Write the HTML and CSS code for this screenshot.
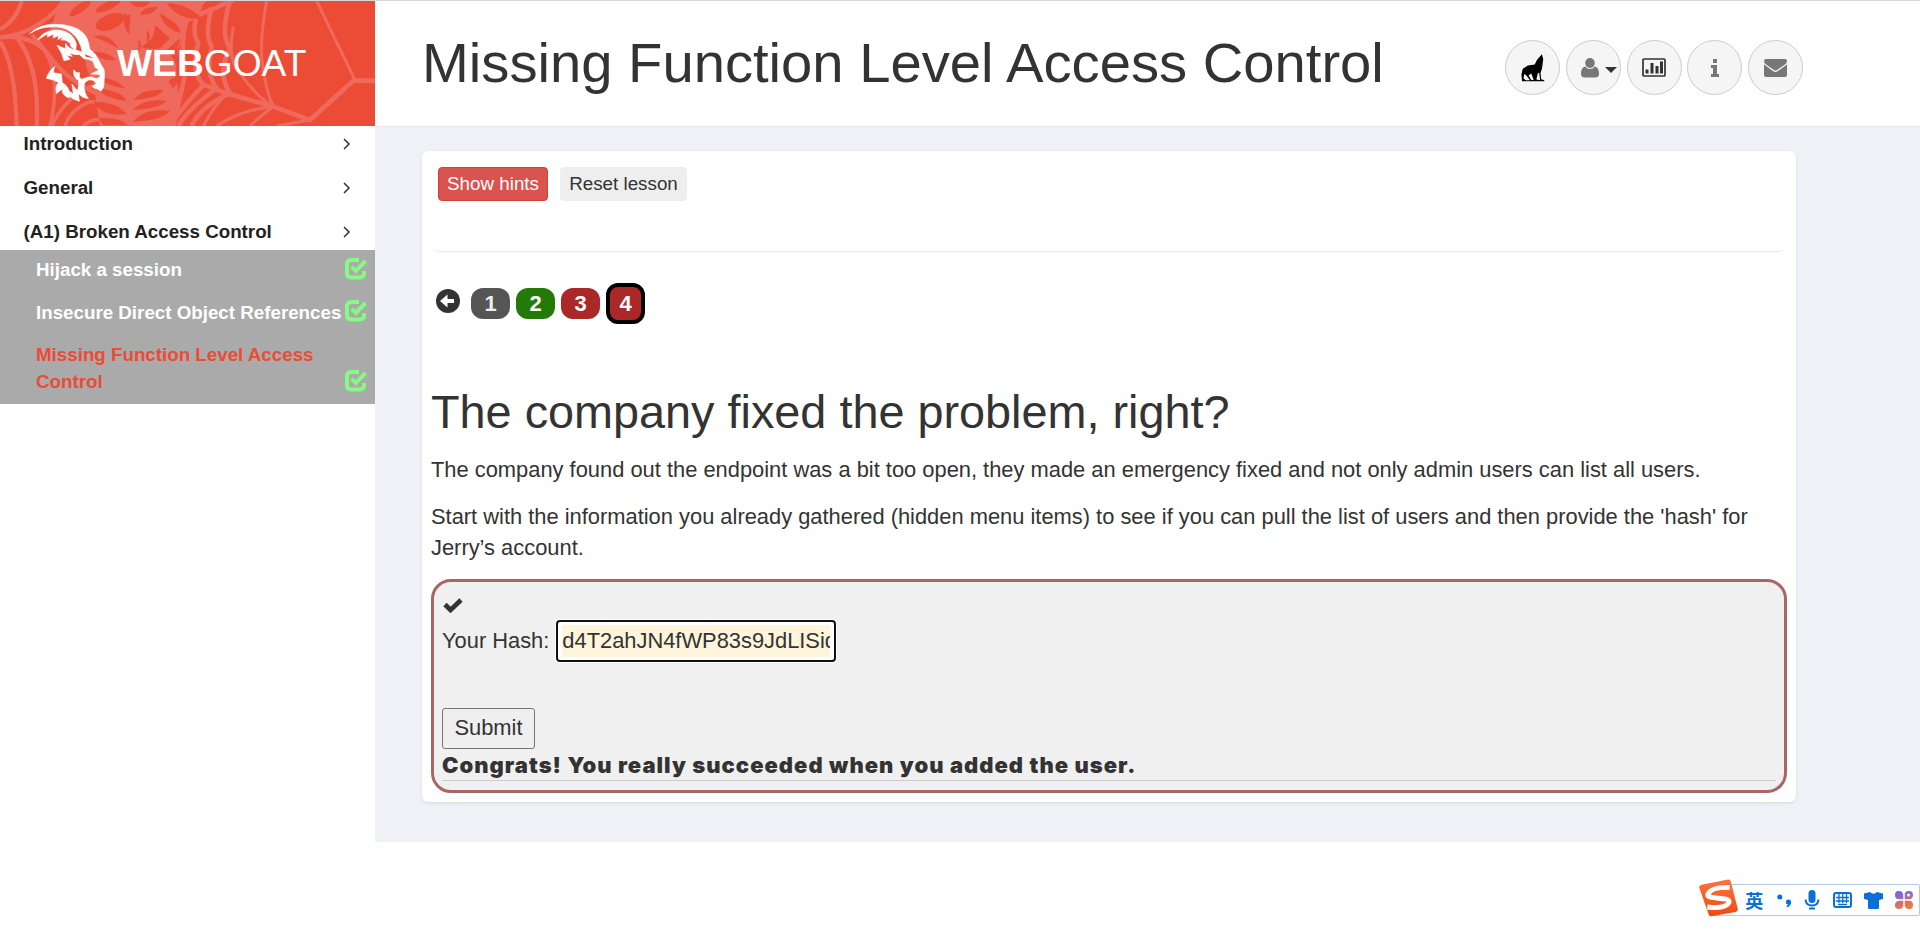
FILE: index.html
```html
<!DOCTYPE html>
<html lang="en">
<head>
<meta charset="utf-8">
<title>WebGoat</title>
<link rel="stylesheet" href="styles.css">
</head>
<body>
<div class="app">
  <aside class="sidebar">
    <div class="brand">
      <svg class="web" viewBox="0 3 1125 375" preserveAspectRatio="none" fill="none" stroke="#ef6a5d" stroke-width="11">
        <path d="M0 112Q65 108 120 70T190 3M0 88Q50 60 65 3M0 112Q100 100 150 170T290 280L390 378M0 125Q45 190 50 378M50 112Q120 200 110 378" stroke-width="13"/>
        <path d="M95 105Q195 190 150 378M155 378Q190 300 270 260Q350 250 390 330M195 378Q210 330 270 305Q340 310 390 378M250 378Q290 340 345 378"/>
        <path d="M150 75Q240 90 290 0M180 105Q270 110 340 0M215 3Q240 55 310 80L430 150" stroke-width="13"/>
        <path d="M180 3H620L560 70Q510 180 540 300L520 378H300L280 250Q240 180 260 110L150 90Z" fill="#ef6a5d" stroke="none"/>
        <path d="M560 60Q540 120 555 225L520 378M600 20Q570 90 595 130Q570 210 610 255Q540 330 510 378M640 10Q610 100 635 140Q615 220 650 265Q560 330 535 378M690 3Q660 100 690 145Q650 220 690 280Q600 320 575 378" stroke-width="14"/>
        <path d="M560 60L700 0M600 250L680 280L820 320L930 360L1060 242L1125 242" stroke-width="14"/>
        <path d="M800 3Q775 140 790 210Q800 280 820 320Q720 330 650 378M700 80Q680 180 720 220Q770 290 820 320M950 3L1065 240L930 360M820 320Q790 340 750 378M680 280Q640 320 610 378M930 360L830 378" stroke-width="9"/>
        <g fill="#ec4b36" stroke="none">
          <ellipse cx="330" cy="66" rx="45" ry="23" transform="rotate(-22 330 66)"/>
          <ellipse cx="325" cy="17" rx="42" ry="12" transform="rotate(-25 325 17)"/>
          <ellipse cx="240" cy="25" rx="38" ry="12" transform="rotate(-35 240 25)"/>
          <path d="M372 40Q382 50 392 42L387 104Q366 75 372 40ZM390 5H450Q435 30 400 17ZM420 45Q425 20 475 20Q460 45 420 45ZM500 10Q560 10 605 55Q540 65 500 10ZM620 5H660Q650 25 620 20ZM480 40Q485 80 540 100Q545 75 480 40ZM465 75L510 115L480 145Q450 150 420 140Q465 125 465 75ZM440 90Q460 110 440 128ZM415 115Q430 135 415 155ZM280 110Q325 95 355 145Q310 120 280 110ZM280 155Q325 155 350 180Q300 185 280 155Z"/>
          <path d="M540 115Q525 160 535 205Q515 165 500 150ZM505 245Q525 225 540 235L520 265ZM290 230Q350 235 375 265Q325 260 290 230ZM285 265Q360 270 380 302Q325 300 285 265ZM280 305Q350 305 380 342Q305 350 280 305ZM295 355Q360 350 385 376H310ZM400 300Q425 265 490 270Q475 295 400 300ZM398 330Q430 295 500 302Q480 325 398 330ZM400 365Q430 325 510 332Q490 360 400 365Z"/>
        </g>
      </svg>
      <svg class="goat" viewBox="0 0 255 264" fill="#fff" stroke="#fff" stroke-width="2" stroke-linejoin="round">
        <path d="M14 47Q45 18 90 19Q148 20 172 43Q190 57 194 93L212 110L230 143Q241 155 238 178L236 206L228 220L216 212Q204 212 202 204L214 198L208 188Q188 180 178 197Q174 220 190 242Q170 240 160 226L163 250Q142 244 132 232L134 240Q108 232 112 212L94 227Q90 204 100 193Q85 184 64 181Q71 158 89 145L84 164L109 168L112 195Q124 198 133 220L145 228L141 198L157 219Q164 200 160 187Q143 178 146 155Q154 168 164 164L163 177Q170 188 178 181Q198 172 213 182L226 176L222 169L198 168L222 156L210 148L204 130Q190 121 176 122L164 110Q145 111 133 105L142 115L126 112L135 124L117 128Q112 105 96 82L121 92L122 76Q130 93 152 96Q132 86 136 76Q120 62 108 66L116 54L99 65L100 53L84 60L86 48L67 57L68 47L38 66Q52 42 86 36Q126 34 146 60Q158 75 152 96L172 102Q166 65 138 42Q115 24 79 27Q48 25 14 47Z"/>
        <path d="M178 108L207 120L184 117Z" fill="#ec4b36" stroke="none"/>
      </svg>
      <div class="wordmark"><b>WEB</b>GOAT</div>
    </div>
    <ul class="menu">
      <li><span>Introduction</span><svg class="chev" viewBox="0 0 8 12"><path d="M1 1l5 5-5 5"/></svg></li>
      <li><span>General</span><svg class="chev" viewBox="0 0 8 12"><path d="M1 1l5 5-5 5"/></svg></li>
      <li><span>(A1) Broken Access Control</span><svg class="chev" viewBox="0 0 8 12"><path d="M1 1l5 5-5 5"/></svg></li>
    </ul>
    <ul class="submenu">
      <li><span>Hijack a session</span><svg class="done" viewBox="0 0 22 22"><path class="box" d="M14 2H6.500Q2 2 2 6.500V15Q2 19.500 6.500 19.500H14.500Q19 19.500 19 15V13"/><path class="tick" d="M6.800 8.800l4 4L20.500 3"/></svg></li>
      <li><span>Insecure Direct Object References</span><svg class="done" viewBox="0 0 22 22"><path class="box" d="M14 2H6.500Q2 2 2 6.500V15Q2 19.500 6.500 19.500H14.500Q19 19.500 19 15V13"/><path class="tick" d="M6.800 8.800l4 4L20.500 3"/></svg></li>
      <li class="current"><span>Missing Function Level Access Control</span><svg class="done" viewBox="0 0 22 22"><path class="box" d="M14 2H6.500Q2 2 2 6.500V15Q2 19.500 6.500 19.500H14.500Q19 19.500 19 15V13"/><path class="tick" d="M6.800 8.800l4 4L20.500 3"/></svg></li>
    </ul>
  </aside>
  <main class="main">
    <header class="header">
      <h1>Missing Function Level Access Control</h1>
      <div class="tools">
        <span class="tool"><svg width="24" height="28" viewBox="94 106 70 82"><path d="M155 107L159 121L157 137L155 150L151 162L153 180L162 183V186H97L95 166L99 149L114 140L134 137L141 123ZM104 164L101 177L108 183H120L112 172ZM124 163L116 169L124 182L131 182ZM143 163L139 181L150 183L147 161Z" fill-rule="evenodd"/></svg></span>
        <span class="tool user"><svg width="18" height="20" viewBox="0 0 18 20" fill="#777"><ellipse cx="9" cy="5" rx="4.800" ry="5"/><path d="M4.300 8.500Q6 11 9 11t4.700-2.500Q18 9.500 18 15.500 18 19.500 14.500 19.500H3.500Q0 19.500 0 15.500 0 9.500 4.300 8.500Z"/></svg><i class="caret"></i></span>
        <span class="tool"><svg width="24" height="19" viewBox="0 0 24 19" fill="#333"><rect x="1" y="1" width="22" height="17" rx="1" fill="none" stroke="#333" stroke-width="1.700"/><path d="M3.500 11.500h3v4h-3zM8.500 5h3v10.500h-3zM13.500 8h3v7.500h-3zM18 3.500h3v12h-3z"/></svg></span>
        <span class="tool"><svg width="8" height="18" viewBox="0 0 8 18" fill="#777"><path d="M2 0h4v4H2zM0 6h6v9h2v3H0v-3h2V9H0z"/></svg></span>
        <span class="tool"><svg width="23" height="18" viewBox="0 0 23 18" fill="#777"><path d="M0 2Q0 0 2 0H21Q23 0 23 2 23 4 21 5.500L13 11Q11.500 12 10 11L2 5.500Q0 4 0 2ZM0 5.500L9 12Q11.500 13.800 14 12L23 5.500V16Q23 18 21 18H2Q0 18 0 16Z"/></svg></span>
      </div>
    </header>
    <div class="content">
      <section class="card">
        <div class="lesson-actions">
          <button class="btn hints">Show hints</button>
          <button class="btn reset">Reset lesson</button>
        </div>
        <nav class="pages">
          <svg class="back" viewBox="0 0 24 24"><circle cx="12" cy="12" r="12" fill="#333"/><path d="M4 12l7.500-6.500v4.500H18v4h-6.500v4.500z" fill="#fff"/></svg>
          <span class="page intro">1</span><span class="page solved">2</span><span class="page open">3</span><span class="page open active">4</span>
        </nav>
        <h2>The company fixed the problem, right?</h2>
        <p>The company found out the endpoint was a bit too open, they made an emergency fixed and not only admin users can list all users.</p>
        <p>Start with the information you already gathered (hidden menu items) to see if you can pull the list of users and then provide the 'hash' for Jerry’s account.</p>
        <form class="attack">
          <svg class="ok" viewBox="0 0 20 15"><path d="M2 6.500l5.500 5.500L18 2" fill="none" stroke="#333" stroke-width="4.700"/></svg>
          <div class="field"><label for="hash">Your Hash:</label><div class="hash-box"><input id="hash" value="d4T2ahJN4fWP83s9JdLISidnSnYQ="></div></div>
          <button class="submit" type="button">Submit</button>
          <div class="feedback">Congrats! You really succeeded when you added the user.</div>
        </form>
      </section>
    </div>
  </main>
</div>
<div class="ime">
  <svg class="ime-logo" viewBox="0 0 118 114"><defs><linearGradient id="lg" x2="0" y2="1"><stop stop-color="#fa7440"/><stop offset="1" stop-color="#f04a12"/></linearGradient></defs><path d="M8 17L88 1Q94 0 96 6L117 89Q119 97 111 99L38 112Q31 114 29 106L1 27Q-1 19 8 17Z" fill="url(#lg)"/><path d="M93 25Q38 23 27 45C22 65 94 50 91 70Q82 91 25 84" fill="none" stroke="#fff" stroke-width="15"/></svg>
  <span class="ime-lang">英</span>
  <svg width="15" height="15" viewBox="0 0 15 15" fill="#0870d8"><circle cx="2.800" cy="4" r="2.500"/><circle cx="11.500" cy="9" r="2.600"/><path d="M14.100 9Q14 13 10 14.500L9.500 13Q12 12 11.500 10z"/></svg>
  <svg width="16" height="20" viewBox="0 0 16 20" fill="#0870d8"><rect x="4.500" width="7" height="13" rx="3.500"/><path d="M1.500 9.500Q2 15.500 8 15.500T14.500 9.500" fill="none" stroke="#0870d8" stroke-width="2"/><rect x="5" y="17.500" width="6" height="2"/></svg>
  <svg width="19" height="16" viewBox="0 0 19 16" fill="none" stroke="#0870d8" stroke-width="2"><rect x="1" y="1" width="17" height="14" rx="2"/><path d="M3 5.500h13M3 9h13M6 2v9M9.800 2v9M13.500 2v9M5 12.500h9" stroke-width="1.300"/></svg>
  <svg width="19" height="17" viewBox="0 0 19 17" fill="#0870d8"><path d="M0 1.500L6 0Q9.500 3.500 13 0L19 1.500V7L15 8V16Q15 17 14 17H5Q4 17 4 16V8L0 7Z"/></svg>
  <svg width="18" height="18" viewBox="0 0 18 18"><defs><linearGradient id="gg" x2=".3" y2="1"><stop offset=".2" stop-color="#7568e0"/><stop offset="1" stop-color="#f87838"/></linearGradient></defs><path d="M4 0Q8.300 0 8.300 5V8.300H4Q0 8.300 0 4T4 0M14 0Q18 0 18 4T14 8.300H9.700V4Q9.700 0 14 0M4 9.700H8.300V14Q8.300 18 4 18T0 14 4 9.700M9.700 9.700H14Q18 9.700 18 14T14 18 9.700 14Z" fill="url(#gg)"/><circle cx="13.500" cy="4" r="1.500" fill="#fff"/></svg>
</div>
</body>
</html>
```
FILE: styles.css
```css
* { box-sizing: border-box; }
body {
  margin: 0;
  background: #fff;
  color: #333;
  font-family: "Liberation Sans", Arial, sans-serif;
  font-size: 21.333px;
  overflow: hidden;
}
h1, h2, p, ul { margin: 0; padding: 0; }
h1, h2 { font-weight: normal; }
ul { list-style: none; }
button, input { font: inherit; color: inherit; }
svg { flex: none; display: block; }
.app { display: flex; height: 842px; border-top: 1px solid #d8d8d8; }

.sidebar { width: 375px; flex: none; font-size: 18.750px; font-weight: bold; line-height: 26.667px; }
.brand {
  height: 125px;
  background: #ec4b36;
  display: grid;
  grid-template-columns: 25px 85px 1fr;
  overflow: hidden;
}
.web { grid-area: 1 / 1 / 2 / 4; width: 375px; height: 125px; }
.goat { grid-area: 1 / 2; width: 85px; height: 88px; margin-top: 17px; }
.wordmark {
  grid-area: 1 / 3;
  padding: 39px 0 0 7px;
  font-size: 37.200px;
  line-height: 46px;
  font-weight: normal;
  color: #fff;
}
.menu { height: 124px; }
.menu li {
  display: flex;
  justify-content: space-between;
  align-items: center;
  height: 44px;
  padding: 0 24px 8px 23.500px;
  color: #222;
}
.chev { width: 8px; height: 12px; fill: none; stroke: #333; stroke-width: 1.5; }
.submenu { background: #aaa; color: #fff; height: 154px; }
.submenu li {
  display: flex;
  justify-content: space-between;
  align-items: flex-end;
  padding: 7px 8px 9px 36px;
}
.submenu span { white-space: nowrap; }
.submenu .current { color: #ec4b36; }
.submenu .current span { white-space: normal; width: 290px; }
.done { width: 22px; height: 22px; margin-bottom: 4px; fill: none; stroke: #84fc84; stroke-width: 4; }
.done .tick { stroke-width: 4; }

.main { flex: 1; display: flex; flex-direction: column; }
.header {
  height: 126px;
  border-bottom: 1px solid #e6e6ea;
  padding: 0 117px 0 47px;
  display: flex;
  justify-content: space-between;
}
h1 { font-size: 56.200px; line-height: 64px; padding-top: 30px; white-space: nowrap; }
.tools { display: flex; gap: 5.700px; padding-top: 39px; }
.tool {
  width: 55px;
  height: 55px;
  border: 1px solid #ccc;
  border-radius: 50%;
  background: #f5f5f5;
  display: flex;
  align-items: center;
  justify-content: center;
}
.tool.user { gap: 6px; padding-left: 11px; }
.caret { border: 6px solid transparent; border-top-color: #333; border-bottom: 0; margin-top: 4px; }
.content { flex: 1; background: #f0f1f7; padding: 24px 124px 0 47px; }
.card {
  height: 651px;
  padding: 0 9px;
  background: #fff;
  border-radius: 6px;
  box-shadow: 0 1px 3px rgba(0, 0, 0, .1);
}
.lesson-actions {
  height: 100px;
  padding: 16px 7px 0;
  display: flex;
  align-items: flex-start;
  gap: 12px;
  border-radius: 8px;
  box-shadow: 0 2px 1px -1px rgba(0, 0, 0, .09);
}
.btn {
  height: 34px;
  padding: 0;
  font-size: 18.800px;
  line-height: 30px;
  border: 1px solid #eee;
  border-radius: 4px;
  background: #eee;
}
.hints { width: 110px; background: #d9534f; border-color: #d43f3a; color: #fff; }
.reset { width: 127px; }
.pages { display: flex; align-items: center; gap: 6px; height: 42px; margin-top: 31px; padding-left: 5px; }
.back { width: 24px; height: 24px; margin: -4px 5px 0 0; }
.page {
  width: 39px;
  height: 31px;
  border-radius: 12px;
  color: #fff;
  font-size: 22px;
  font-weight: bold;
  line-height: 31px;
  text-align: center;
}
.intro { background: #555; color: #eee; }
.solved { background: #247a08; }
.open { background: #aa2828; }
.active { height: 41px; border: 4px solid #000; line-height: 33px; }
h2 { font-size: 46.800px; line-height: 52px; margin: 62px 0 16px; }
p { font-size: 21.890px; line-height: 31px; margin-bottom: 16.300px; }
.attack {
  height: 214px;
  margin-top: -1px;
  padding: 16px 8px 10px;
  border: 3px solid #a66;
  border-radius: 20px;
  background: #f0f0f0;
}
.ok { width: 20px; height: 15px; margin-left: 1px; }
.field { display: flex; align-items: center; height: 43px; margin-top: 7px; gap: 7px; font-size: 21.870px; }
.hash-box {
  width: 280px;
  height: 42px;
  padding: 3px 4px;
  background: #fff;
  border: 2px solid #111;
  border-radius: 4px;
  box-shadow: 0 0 0 1px #fff;
}
.hash-box input { display: block; width: 268px; height: 32px; padding: 0; border: 0; outline: 0; background: #fff5dc; }
.submit {
  display: block;
  width: 93px;
  height: 41px;
  margin-top: 45px;
  padding: 0;
  border: 1px solid #767676;
  border-radius: 3px;
  background: #efefef;
  font-size: 21.870px;
}
.feedback {
  height: 32px;
  border-bottom: 1px solid #ccc;
  font-family: Inter, "Liberation Sans", sans-serif;
  font-size: 22px;
  font-weight: 900;
  letter-spacing: 1.020px;
  line-height: 32px;
  white-space: nowrap;
}
.ime {
  position: fixed;
  right: 0;
  top: 884px;
  width: 208px;
  height: 32px;
  padding: 0 6px 0 0;
  border: 1px solid #b8c8e0;
  border-radius: 2px;
  background: #fff;
  display: flex;
  align-items: center;
  justify-content: space-between;
}
.ime-logo { width: 39px; height: 38px; margin: -5px 0 0 -14px; }
.ime-lang { color: #0870d8; font: bold 18px/30px "Noto Sans CJK SC", sans-serif; margin: 0 2px 0 -5px; }
```
